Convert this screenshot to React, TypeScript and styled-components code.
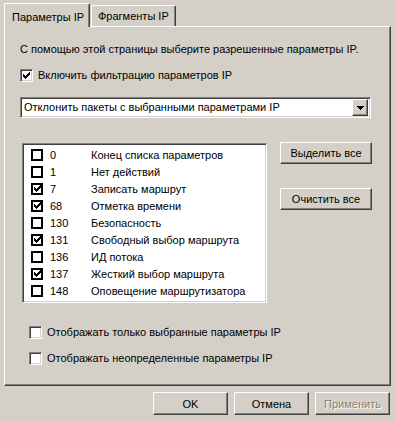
import React from 'react';
import styled, { createGlobalStyle, css } from 'styled-components';

const GlobalStyle = createGlobalStyle`
    html, body {
        margin: 0;
        padding: 0;
        background: #d4d0c8;
    }
    body {
        font-family: 'Liberation Sans', Arial, sans-serif;
        font-size: 11px;
        color: #000;
    }
`;

const raised = css`
    border: 1px solid;
    border-color: #fff #404040 #404040 #fff;
    box-shadow: inset -1px -1px #808080, inset 1px 1px #d4d0c8;
`;

const sunken = css`
    border: 1px solid;
    border-color: #808080 #fff #fff #808080;
    box-shadow: inset 1px 1px #404040, inset -1px -1px #d4d0c8;
`;

const Dialog = styled.div`
    width: 396px;
    height: 422px;
    box-sizing: border-box;
    padding-top: 3px;
    display: flex;
    flex-direction: column;
    background: #d4d0c8;
`;

const TabStrip = styled.div`
    display: flex;
    align-items: flex-end;
    gap: 1px;
    height: 23px;
    padding-left: 4px;
    position: relative;
    z-index: 1;
`;

const Tab = styled.div<{ active?: boolean }>`
    box-sizing: border-box;
    height: ${p => (p.active ? 24 : 21)}px;
    width: ${p => (p.active ? 86 : 85)}px;
    margin-bottom: ${p => (p.active ? -1 : 0)}px;
    padding: ${p => (p.active ? '7px 0 0 7px' : '4px 0 0 6px')};
    background: #d4d0c8;
    border-left: 1px solid #fff;
    border-top: 1px solid #fff;
    border-right: 1px solid #404040;
    border-radius: 2px 2px 0 0;
    box-shadow: inset -1px 0 #808080;
    white-space: nowrap;
`;

const Panel = styled.div`
    box-sizing: border-box;
    margin-left: 4px;
    width: 387px;
    height: 360px;
    border-left: 1px solid #fff;
    border-top: 1px solid #fff;
    border-right: 1px solid #404040;
    border-bottom: 1px solid #404040;
    box-shadow: inset -1px -1px #808080;
    padding: 16px 0 0 15px;
    display: flex;
    flex-direction: column;
`;

const Intro = styled.div`
    line-height: 13px;
    height: 13px;
`;

const CheckRow = styled.label<{ top: number; indent?: number }>`
    display: flex;
    align-items: center;
    gap: 5px;
    height: 13px;
    line-height: 13px;
    margin-top: ${p => p.top}px;
    margin-left: ${p => p.indent ?? 0}px;
`;

const Box = styled.span`
    ${sunken};
    box-sizing: border-box;
    width: 13px;
    height: 13px;
    background: #fff;
    display: flex;
    align-items: center;
    justify-content: center;
    flex: none;
`;

const Combo = styled.div`
    ${sunken};
    box-sizing: border-box;
    margin-top: 15px;
    width: 351px;
    height: 21px;
    background: #fff;
    display: flex;
    align-items: center;
    padding: 2px 2px 2px 3px;
`;

const ComboText = styled.span`
    flex: 1;
    line-height: 17px;
`;

const ComboButton = styled.span`
    ${raised};
    box-sizing: border-box;
    width: 16px;
    height: 17px;
    background: #d4d0c8;
    display: flex;
    align-items: center;
    justify-content: center;
`;

const ListArea = styled.div`
    display: flex;
    align-items: flex-start;
    margin-top: 25px;
    margin-left: 2px;
    gap: 13px;
`;

const ListBox = styled.div`
    ${sunken};
    box-sizing: border-box;
    width: 245px;
    height: 160px;
    background: #fff;
    padding: 2px 0 0 8px;
`;

const ListRow = styled.div`
    display: flex;
    align-items: center;
    height: 17px;
`;

const FlatBox = styled.span`
    box-sizing: border-box;
    width: 12px;
    height: 12px;
    border: 2px solid #000;
    background: #fff;
    display: flex;
    align-items: center;
    justify-content: center;
    flex: none;
`;

const Code = styled.span`
    width: 41px;
    padding-left: 7px;
`;

const Name = styled.span`
    white-space: nowrap;
`;

const ButtonColumn = styled.div`
    display: flex;
    flex-direction: column;
    gap: 24px;
    margin-top: -1px;
`;

const Button = styled.div<{ w: number; disabled?: boolean }>`
    ${raised};
    box-sizing: border-box;
    width: ${p => p.w}px;
    height: ${p => (p.w > 80 ? 22 : 23)}px;
    display: flex;
    align-items: center;
    justify-content: center;
    background: #d4d0c8;
    color: ${p => (p.disabled ? '#808080' : '#000')};
    text-shadow: ${p => (p.disabled ? '1px 1px #fff' : 'none')};
`;

const Footer = styled.div`
    display: flex;
    justify-content: flex-end;
    gap: 6px;
    margin-top: 6px;
    padding-right: 6px;
`;

function Check({ size = 7 }: { size?: number }) {
    return (
        <svg width={size} height={size} viewBox="0 0 7 7" shapeRendering="crispEdges">
            <path
                d="M6 0h1v3h-1zM5 1h1v3h-1zM4 2h1v3h-1zM3 3h1v3h-1zM2 4h1v3h-1zM1 3h1v3h-1zM0 2h1v3h-1z"
                fill="#000"
            />
        </svg>
    );
}

const params = [
    { code: 0, name: 'Конец списка параметров', on: false },
    { code: 1, name: 'Нет действий', on: false },
    { code: 7, name: 'Записать маршрут', on: true },
    { code: 68, name: 'Отметка времени', on: true },
    { code: 130, name: 'Безопасность', on: false },
    { code: 131, name: 'Свободный выбор маршрута', on: true },
    { code: 136, name: 'ИД потока', on: false },
    { code: 137, name: 'Жесткий выбор маршрута', on: true },
    { code: 148, name: 'Оповещение маршрутизатора', on: false },
];

export default function App() {
    return (
        <Dialog>
            <GlobalStyle />
            <TabStrip>
                <Tab active>Параметры IP</Tab>
                <Tab>Фрагменты IP</Tab>
            </TabStrip>
            <Panel>
                <Intro>С помощью этой страницы выберите разрешенные параметры IP.</Intro>
                <CheckRow top={13}>
                    <Box>
                        <Check />
                    </Box>
                    Включить фильтрацию параметров IP
                </CheckRow>
                <Combo>
                    <ComboText>Отклонить пакеты с выбранными параметрами IP</ComboText>
                    <ComboButton>
                        <svg width="7" height="4" viewBox="0 0 7 4" shapeRendering="crispEdges">
                            <path d="M0 0h7v1h-7zM1 1h5v1h-5zM2 2h3v1h-3zM3 3h1v1h-1z" fill="#000" />
                        </svg>
                    </ComboButton>
                </Combo>
                <ListArea>
                    <ListBox>
                        {params.map(p => (
                            <ListRow key={p.code}>
                                <FlatBox>{p.on && <Check />}</FlatBox>
                                <Code>{p.code}</Code>
                                <Name>{p.name}</Name>
                            </ListRow>
                        ))}
                    </ListBox>
                    <ButtonColumn>
                        <Button w={92}>Выделить все</Button>
                        <Button w={92}>Очистить все</Button>
                    </ButtonColumn>
                </ListArea>
                <CheckRow top={23} indent={9}>
                    <Box />
                    Отображать только выбранные параметры IP
                </CheckRow>
                <CheckRow top={13} indent={9}>
                    <Box />
                    Отображать неопределенные параметры IP
                </CheckRow>
            </Panel>
            <Footer>
                <Button w={75}>OK</Button>
                <Button w={75}>Отмена</Button>
                <Button w={75} disabled>
                    Применить
                </Button>
            </Footer>
        </Dialog>
    );
}
